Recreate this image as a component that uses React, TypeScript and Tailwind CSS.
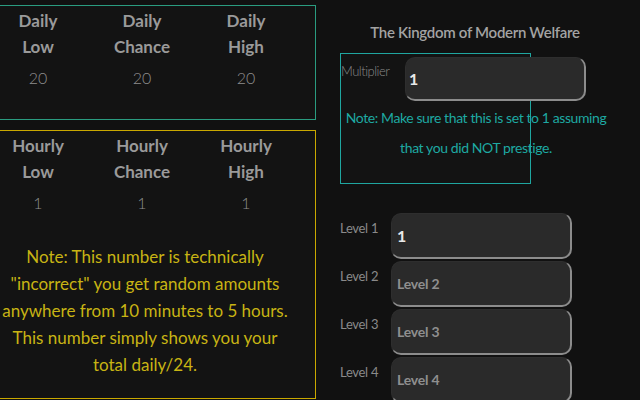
import React from "react";

const font = { fontFamily: "Lato, 'Noto Sans', sans-serif" };

function Col({ a, b, v }: { a: string; b: string; v: string }) {
  return (
    <div className="flex flex-col items-center">
      <div className="text-[17px] font-bold leading-[26px] text-[#9a9a9a]">{a}</div>
      <div className="text-[17px] font-bold leading-[26px] text-[#9a9a9a]">{b}</div>
      <div className="mt-[6px] text-[16px] font-light leading-[24px] text-[#8e8e8e]">{v}</div>
    </div>
  );
}

function Field({ value, placeholder }: { value?: string; placeholder?: string }) {
  return (
    <div className="flex h-[46px] w-[181px] shrink-0 items-center rounded-[10px] border border-[#2e2e2e] border-b-2 border-r-2 border-b-[#8c8c8c] border-r-[#8c8c8c] bg-[#2a2a2a] px-[5px]">
      {value ? (
        <span className="text-[16px] font-bold text-[#e8e8e8]">{value}</span>
      ) : (
        <span className="text-[14px] font-bold tracking-[-0.2px] text-[#8f8f8f]">{placeholder}</span>
      )}
    </div>
  );
}

export default function App() {
  return (
    <div className="flex h-[400px] w-[640px] items-start overflow-hidden bg-[#111111]" style={font}>
      <div className="ml-[-15px] mt-[5px] flex w-[331px] shrink-0 flex-col gap-[10px]">
        <div className="h-[115px] shrink-0 border border-[#2a9c80] bg-[#131313] pt-[2px]">
          <div className="grid w-[312px] grid-cols-3">
            <Col a="Daily" b="Low" v="20" />
            <Col a="Daily" b="Chance" v="20" />
            <Col a="Daily" b="High" v="20" />
          </div>
        </div>
        <div className="h-[269px] shrink-0 border border-[#c9a800] bg-[#131313] pt-[2px]">
          <div className="grid w-[312px] grid-cols-3">
            <Col a="Hourly" b="Low" v="1" />
            <Col a="Hourly" b="Chance" v="1" />
            <Col a="Hourly" b="High" v="1" />
          </div>
          <div className="mt-[28px] w-[318px] whitespace-nowrap text-center text-[17px] leading-[27px] text-[#c8b414]">
            Note: This number is technically
            <br />
            "incorrect" you get random amounts
            <br />
            anywhere from 10 minutes to 5 hours.
            <br />
            This number simply shows you your
            <br />
            total daily/24.
          </div>
        </div>
      </div>
      <div className="ml-[24px] flex w-[270px] shrink-0 flex-col">
        <div className="mt-[21px] shrink-0 text-center text-[15px] font-semibold leading-[22px] tracking-[-0.3px] text-[#a3a3a3]">
          The Kingdom of Modern Welfare
        </div>
        <div className="mt-[10px] h-[131px] w-[191px] shrink-0 border border-[#1fa6a0] bg-[#131313]">
          <div className="w-[270px]">
            <div className="flex items-start pt-[3px]">
              <span className="mt-[5px] w-[64px] text-[13px] font-light tracking-[-0.5px] text-[#8a8a8a]">Multiplier</span>
              <div className="flex h-[44px] w-[181px] items-center rounded-[10px] border border-[#2e2e2e] border-b-2 border-r-2 border-b-[#8c8c8c] border-r-[#8c8c8c] bg-[#2a2a2a] px-[3px]">
                <span className="text-[16px] font-bold text-[#e8e8e8]">1</span>
              </div>
            </div>
            <div className="mt-[2px] whitespace-nowrap text-center text-[14px] leading-[30px] tracking-[-0.4px] text-[#1ea9a2]">
              Note: Make sure that this is set to 1 assuming
              <br />
              that you did NOT prestige.
            </div>
          </div>
        </div>
        <div className="mt-[29px] flex shrink-0 flex-col gap-[2px]">
          {[
            { l: "Level 1", v: "1" },
            { l: "Level 2", p: "Level 2" },
            { l: "Level 3", p: "Level 3" },
            { l: "Level 4", p: "Level 4" },
          ].map((r) => (
            <div key={r.l} className="flex shrink-0 items-start">
              <span className="mt-[6px] w-[51px] text-[13px] tracking-[-0.3px] text-[#8a8a8a]">{r.l}</span>
              <Field value={r.v} placeholder={r.p} />
            </div>
          ))}
        </div>
      </div>
    </div>
  );
}
